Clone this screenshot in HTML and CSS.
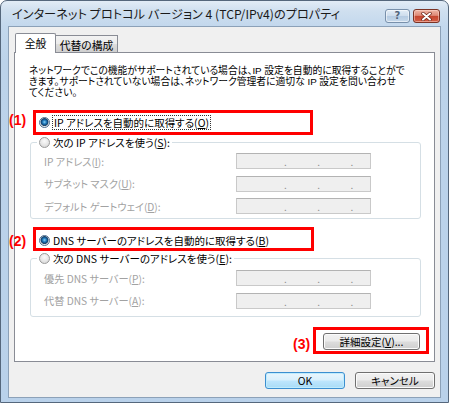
FILE: index.html
```html
<!DOCTYPE html>
<html lang="ja">
<head>
<meta charset="utf-8">
<title>IPv4 プロパティ</title>
<link rel="stylesheet" href="styles.css">
</head>
<body>
<div class="window">
  <div class="titlebar">
    <div class="title">インターネット プロトコル バージョン 4 (TCP/IPv4)のプロパティ</div>
    <div class="caption-buttons">
      <div class="cbtn help">?</div>
      <div class="cbtn close">
        <svg width="11" height="9" viewBox="0 0 11 9">
          <path d="M2 1.5 L9 7.5 M9 1.5 L2 7.5" stroke="#6a2418" stroke-width="3.4" stroke-linecap="round"/>
          <path d="M2 1.5 L9 7.5 M9 1.5 L2 7.5" stroke="#ffffff" stroke-width="2" stroke-linecap="round"/>
        </svg>
      </div>
    </div>
  </div>
  <div class="client">
    <div class="tabs">
      <div class="tab active">全般</div>
      <div class="tab">代替の構成</div>
    </div>
    <div class="panel">
      <div class="desc">
        <span class="dline">ネットワークでこの機能がサポートされている場合は、IP 設定を自動的に取得することがで</span>
        <span class="dline">きます。サポートされていない場合は、ネットワーク管理者に適切な IP 設定を問い合わせ</span>
        <span class="dline">てください。</span>
      </div>

      <div class="radio-row top-radio first">
        <span class="radio checked"></span>
        <span class="label focus">IP アドレスを自動的に取得する(<u>O</u>)</span>
      </div>

      <div class="group g1">
        <div class="radio-row legend">
          <span class="radio"></span>
          <span class="label">次の IP アドレスを使う(<u>S</u>):</span>
        </div>
        <div class="rows r1">
          <div class="field-row"><span class="flabel">IP アドレス(<u>I</u>):</span><span class="ipbox"><i>.</i><i>.</i><i>.</i></span></div>
          <div class="field-row"><span class="flabel">サブネット マスク(<u>U</u>):</span><span class="ipbox"><i>.</i><i>.</i><i>.</i></span></div>
          <div class="field-row"><span class="flabel">デフォルト ゲートウェイ(<u>D</u>):</span><span class="ipbox"><i>.</i><i>.</i><i>.</i></span></div>
        </div>
      </div>

      <div class="radio-row top-radio second">
        <span class="radio checked"></span>
        <span class="label">DNS サーバーのアドレスを自動的に取得する(<u>B</u>)</span>
      </div>

      <div class="group g2">
        <div class="radio-row legend">
          <span class="radio"></span>
          <span class="label">次の DNS サーバーのアドレスを使う(<u>E</u>):</span>
        </div>
        <div class="rows r2">
          <div class="field-row"><span class="flabel">優先 DNS サーバー(<u>P</u>):</span><span class="ipbox"><i>.</i><i>.</i><i>.</i></span></div>
          <div class="field-row"><span class="flabel">代替 DNS サーバー(<u>A</u>):</span><span class="ipbox"><i>.</i><i>.</i><i>.</i></span></div>
        </div>
      </div>

      <div class="adv-row">
        <div class="btn adv">詳細設定(<u>V</u>)...</div>
      </div>
    </div>
    <div class="dlg-buttons">
      <div class="btn default">OK</div>
      <div class="btn">キャンセル</div>
    </div>
  </div>

  <div class="anno-box b1"></div>
  <div class="anno-box b2"></div>
  <div class="anno-box b3"></div>
  <div class="anno-label l1">(1)</div>
  <div class="anno-label l2">(2)</div>
  <div class="anno-label l3">(3)</div>
</div>
</body>
</html>
```

FILE: styles.css
```css
* { box-sizing: border-box; }

html, body {
  margin: 0;
  padding: 0;
  background: #ffffff;
}

body {
  width: 450px;
  height: 403px;
  overflow: hidden;
  font-family: "Noto Sans CJK JP", "Noto Sans", sans-serif;
  font-feature-settings: "palt" 1;
  color: #000;
}

.window {
  position: relative;
  width: 449px;
  height: 403px;
  border: 1px solid #55677c;
  border-radius: 7px 7px 0 0;
  background: linear-gradient(180deg, #e2ecf6 0px, #cfdfef 10px, #c3d8ed 25px, #bcd3ea 60px, #b9d1ea 100%);
  padding: 0 7px 4px 7px;
  display: flex;
  flex-direction: column;
}

/* ---------- title bar ---------- */
.titlebar {
  height: 25px;
  flex: none;
  display: flex;
  align-items: flex-start;
  justify-content: space-between;
}

.title {
  margin: 6px 0 0 4px;
  font-size: 12.2px;
  line-height: 15px;
  color: #1a1a1a;
  white-space: nowrap;
}

.caption-buttons {
  display: flex;
  gap: 3px;
  margin: 8px 1px 0 0;
}

.cbtn {
  height: 14px;
  border-radius: 3px;
  display: flex;
  align-items: center;
  justify-content: center;
}

.cbtn.help {
  width: 25px;
  border: 1px solid #7890ab;
  background: linear-gradient(180deg, #e3edf7 0%, #cddcec 50%, #b5cbe2 51%, #c7d9eb 100%);
  box-shadow: inset 0 0 0 1px rgba(255,255,255,0.55);
  font-family: "DejaVu Sans", sans-serif;
  font-size: 10px;
  font-weight: bold;
  color: #52657c;
  line-height: 1;
}

.cbtn.close {
  width: 27px;
  border: 1px solid #7b3325;
  background: linear-gradient(180deg, #efb6a6 0%, #de8a78 45%, #c5462f 52%, #d35d45 100%);
  box-shadow: inset 0 0 0 1px rgba(255,220,210,0.5);
}

/* ---------- client ---------- */
.client {
  flex: 1;
  background: #f0f0f0;
  border: 1px solid #8ca1b8;
  padding: 6px 5px 0 5px;
  display: flex;
  flex-direction: column;
}

.tabs {
  display: flex;
  align-items: flex-end;
  height: 20px;
  margin-bottom: -1px;
  padding-left: 1px;
  position: relative;
  z-index: 1;
}

.tab {
  border: 1px solid #898c95;
  border-bottom: none;
  font-size: 10.8px;
  display: flex;
  align-items: center;
  justify-content: center;
}

.tab.active {
  width: 41px;
  height: 20px;
  background: #ffffff;
  border-radius: 2px 2px 0 0;
  padding-bottom: 2px;
}

.tab:not(.active) {
  width: 62px;
  height: 17px;
  margin-bottom: 1px;
  border-left: none;
  background: linear-gradient(180deg, #f3f3f3 0%, #ebebeb 50%, #dddddd 51%, #cfcfcf 100%);
  padding-top: 1px;
}

.panel {
  height: 310px;
  background: #ffffff;
  border: 1px solid #898c95;
  display: flex;
  flex-direction: column;
}

.desc {
  margin: 11.5px 0 0 14px;
  font-family: "Liberation Sans", "Noto Sans CJK JP", sans-serif;
  font-size: 9.8px;
  display: flex;
  flex-direction: column;
}

.dline {
  display: block;
  height: 11px;
  line-height: 11px;
  white-space: nowrap;
}

/* ---------- radios ---------- */
.radio-row {
  height: 14px;
  display: flex;
  align-items: center;
  font-size: 10.5px;
}

.top-radio { padding-left: 24px; }
.top-radio.first { margin-top: 18px; }
.top-radio.second { margin-top: 14px; }

.radio {
  width: 11px;
  height: 11px;
  flex: none;
  border-radius: 50%;
  border: 1px solid #9a9a9a;
  background: radial-gradient(circle at 50% 35%, #fbfbfb 0%, #e6e6e6 55%, #cfcfcf 100%);
  margin-right: 3px;
}

.radio.checked {
  border-color: #4f6f90;
  background: radial-gradient(circle at 50% 45%, #8fd3f7 0px, #2b86c4 1.6px, #0f4d86 3px, #254766 3.6px, #dfe4ea 4.3px, #f6f6f6 100%);
}

.label { line-height: 13px; white-space: nowrap; }

.label.focus {
  outline: 1px dotted #333;
  outline-offset: 0;
  padding: 0 1px;
}

u { text-decoration: underline; text-underline-offset: 1px; }

/* ---------- group boxes ---------- */
.group {
  margin: 0 13px 0 15px;
  border: 1px solid #d5dfe5;
  border-radius: 3px;
}

.g1 { margin-top: 12.5px; padding-bottom: 4px; }
.g2 { margin-top: 11px; padding-bottom: 7px; }

.legend {
  align-self: flex-start;
  width: max-content;
  margin: -8px 0 0 6px;
  padding: 0 2px;
  background: #ffffff;
}

.rows {
  display: flex;
  flex-direction: column;
  gap: 6.5px;
}

.r1 { margin-top: 4px; }
.r2 { margin-top: 5px; }

.field-row {
  height: 16px;
  display: flex;
  align-items: center;
  padding-left: 13px;
}

.flabel {
  width: 192px;
  font-size: 10.2px;
  color: #a2a2a2;
  white-space: nowrap;
}

.ipbox {
  width: 135px;
  height: 16px;
  border: 1px solid #c9c9c9;
  border-top-color: #b3b3b3;
  background: #efefef;
  display: grid;
  grid-template-columns: repeat(4, 1fr);
  align-items: end;
}

.ipbox i {
  font-style: normal;
  font-size: 10px;
  line-height: 12px;
  color: #8c8c8c;
  transform: translateX(50%);
  text-align: right;
}

/* ---------- buttons ---------- */
.btn {
  height: 17px;
  border: 1px solid #707070;
  border-radius: 3px;
  background: linear-gradient(180deg, #f2f2f2 0%, #ebebeb 48%, #dddddd 52%, #cfcfcf 100%);
  box-shadow: inset 0 0 0 1px #fbfbfb;
  font-size: 10.5px;
  display: flex;
  align-items: center;
  justify-content: center;
  white-space: nowrap;
}

.adv-row {
  margin: 16px 14px 0 0;
  display: flex;
  justify-content: flex-end;
}

.btn.adv { width: 97px; }

.dlg-buttons {
  margin-top: 10px;
  display: flex;
  justify-content: flex-end;
  gap: 10px;
}

.dlg-buttons .btn { width: 80px; }

.btn.default {
  border-color: #3c8fd0;
  background: linear-gradient(180deg, #eaf6fd 0%, #d9f0fc 48%, #bee6fd 52%, #a9dcf6 100%);
  box-shadow: inset 0 0 0 1px #c0ecfd;
}

/* ---------- annotations ---------- */
.anno-box {
  position: absolute;
  border: 3px solid #ff0000;
  z-index: 5;
}

.b1 { left: 32px; top: 109px; width: 280px; height: 25px; }
.b2 { left: 32px; top: 226px; width: 281px; height: 24px; }
.b3 { left: 312px; top: 326px; width: 116px; height: 27px; }

.anno-label {
  position: absolute;
  z-index: 5;
  font-family: "Liberation Sans", Arial, sans-serif;
  font-weight: bold;
  font-size: 14px;
  line-height: 16px;
  color: #ff0000;
}

.l1 { left: 8px; top: 111px; }
.l2 { left: 8px; top: 232px; }
.l3 { left: 292px; top: 335px; }
```
